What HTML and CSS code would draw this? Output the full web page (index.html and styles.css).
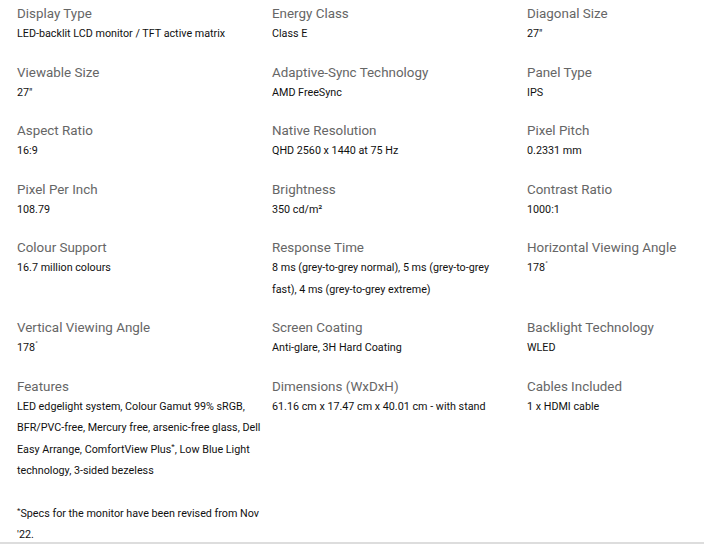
FILE: index.html
```html
<!DOCTYPE html>
<html lang="en">
<head>
<meta charset="utf-8">
<link rel="stylesheet" href="styles.css">
</head>
<body>
<div class="specs">
  <div class="grid">
    <div class="item"><div class="label">Display Type</div><div class="value">LED-backlit LCD monitor / TFT active matrix</div></div>
    <div class="item"><div class="label">Energy Class</div><div class="value">Class E</div></div>
    <div class="item"><div class="label">Diagonal Size</div><div class="value">27"</div></div>

    <div class="item"><div class="label">Viewable Size</div><div class="value">27"</div></div>
    <div class="item"><div class="label">Adaptive-Sync Technology</div><div class="value">AMD FreeSync</div></div>
    <div class="item"><div class="label">Panel Type</div><div class="value">IPS</div></div>

    <div class="item"><div class="label">Aspect Ratio</div><div class="value">16:9</div></div>
    <div class="item"><div class="label">Native Resolution</div><div class="value">QHD 2560 x 1440 at 75 Hz</div></div>
    <div class="item"><div class="label">Pixel Pitch</div><div class="value">0.2331 mm</div></div>

    <div class="item"><div class="label">Pixel Per Inch</div><div class="value">108.79</div></div>
    <div class="item"><div class="label">Brightness</div><div class="value">350 cd/m²</div></div>
    <div class="item"><div class="label">Contrast Ratio</div><div class="value">1000:1</div></div>

    <div class="item"><div class="label">Colour Support</div><div class="value">16.7 million colours</div></div>
    <div class="item"><div class="label">Response Time</div><div class="value">8 ms (grey-to-grey normal), 5 ms (grey-to-grey fast), 4 ms (grey-to-grey extreme)</div></div>
    <div class="item"><div class="label">Horizontal Viewing Angle</div><div class="value">178<sup>˚</sup></div></div>

    <div class="item"><div class="label">Vertical Viewing Angle</div><div class="value">178<sup>˚</sup></div></div>
    <div class="item"><div class="label">Screen Coating</div><div class="value">Anti-glare, 3H Hard Coating</div></div>
    <div class="item"><div class="label">Backlight Technology</div><div class="value">WLED</div></div>

    <div class="item"><div class="label">Features</div><div class="value">LED edgelight system, Colour Gamut 99% sRGB, BFR/PVC-free, Mercury free, arsenic-free glass, Dell Easy Arrange, ComfortView Plus<sup>*</sup>, Low Blue Light technology, 3-sided bezeless</div></div>
    <div class="item"><div class="label">Dimensions (WxDxH)</div><div class="value">61.16 cm x 17.47 cm x 40.01 cm - with stand</div></div>
    <div class="item"><div class="label">Cables Included</div><div class="value">1 x HDMI cable</div></div>
  </div>
  <p class="note"><sup>*</sup>Specs for the monitor have been revised from Nov '22.</p>
</div>
</body>
</html>
```

FILE: styles.css
```css
html, body {
  margin: 0;
  padding: 0;
  background: #fff;
}
body {
  font-family: Roboto, "Liberation Sans", sans-serif;
  overflow: hidden;
  height: 544px;
  border-bottom: 2px solid #ddd;
  box-sizing: border-box;
}
.specs {
  padding: 5px 0 0 17px;
}
.grid {
  display: grid;
  grid-template-columns: 255px 255px 1fr;
  align-items: start;
}
.item {
  padding-right: 11.5px;
  margin-bottom: 19px;
}
.label {
  font-size: 13.4px;
  line-height: 18px;
  color: #666;
}
.value {
  font-size: 10.75px;
  line-height: 21.5px;
  color: #111;
}
sup {
  font-size: 8px;
  line-height: 0;
  vertical-align: 4px;
}
.note {
  margin: 0;
  padding-top: 2px;
  width: 250px;
  font-size: 10.75px;
  line-height: 21.5px;
  color: #111;
}
```
